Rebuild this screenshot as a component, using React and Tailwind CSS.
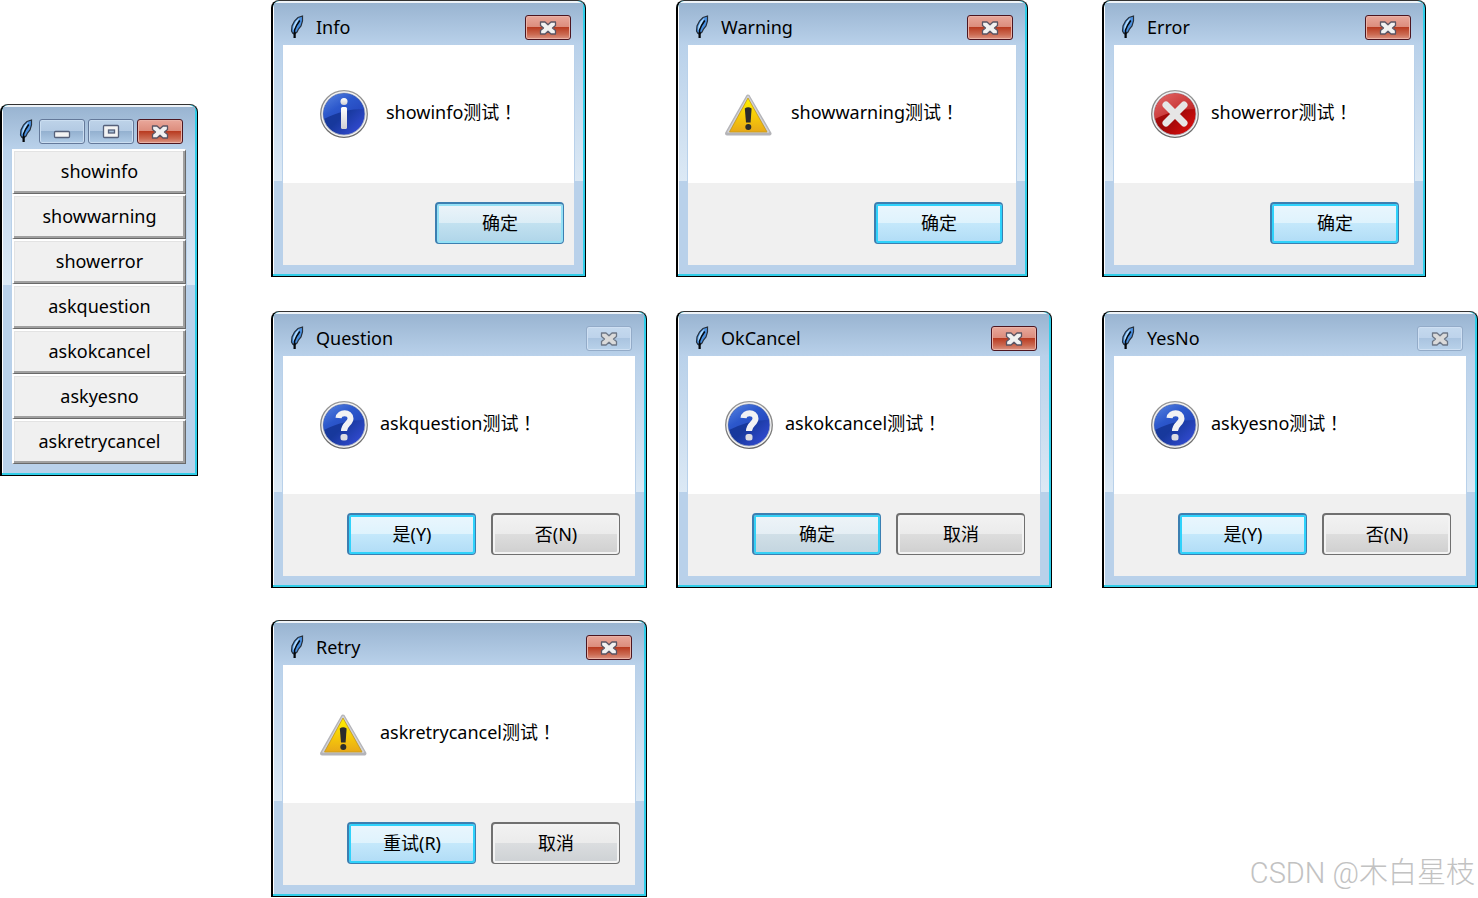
const INFO = 'info', WARN = 'warning', ERR = 'error', ASK = 'question';

const dialogs = [
  { title: 'Info', message: 'showinfo', icon: INFO, size: 'w-[315px]', row: 'mb-[34px]', msg: 'gap-[18px]', foot: 'pr-[10px]', buttons: [{ label: '确定', kind: 'hover' }] },
  { title: 'Warning', message: 'showwarning', icon: WARN, size: 'w-[352px]', row: 'mb-[34px]', msg: 'gap-[18px]', foot: 'pr-[13px]', buttons: [{ label: '确定', kind: 'primary' }] },
  { title: 'Error', message: 'showerror', icon: ERR, size: 'w-[324px]', row: 'mb-[34px]', msg: 'gap-3', foot: 'pr-[15px]', buttons: [{ label: '确定', kind: 'primary' }] },
  { title: 'Question', message: 'askquestion', icon: ASK, size: 'w-[376px]', row: 'mb-8', msg: 'gap-3', foot: 'pr-[15px]', disabled: true, buttons: [{ label: '是(Y)', kind: 'primary' }, { label: '否(N)', kind: 'plain' }] },
  { title: 'OkCancel', message: 'askokcancel', icon: ASK, size: 'w-[376px]', row: 'mb-8', msg: 'gap-3', foot: 'pr-[15px]', buttons: [{ label: '确定', kind: 'fading' }, { label: '取消', kind: 'plain' }] },
  { title: 'YesNo', message: 'askyesno', icon: ASK, size: 'w-[376px]', row: 'mb-8', msg: 'gap-3', foot: 'pr-[15px]', disabled: true, buttons: [{ label: '是(Y)', kind: 'primary' }, { label: '否(N)', kind: 'plain' }] },
  { title: 'Retry', message: 'askretrycancel', icon: WARN, size: 'w-[376px]', row: '', msg: 'gap-3', foot: 'pr-[15px]', buttons: [{ label: '重试(R)', kind: 'primary' }, { label: '取消', kind: 'cool' }] },
];

const commands = ['showinfo', 'showwarning', 'showerror', 'askquestion', 'askokcancel', 'askyesno', 'askretrycancel'];

const buttonKinds = {
  primary: 'border-[#3c7fb1] bg-[linear-gradient(#eaf6fd,#def3fd_50%,#c4e8fb_50%,#b0dcf6)] shadow-[inset_0_0_0_2px_#2fd2fb]',
  fading: 'border-[#3c7fb1] bg-[linear-gradient(#eef4f8,#e4eef4_50%,#d0dfe7_50%,#c3d5df)] shadow-[inset_0_0_0_2px_#36d0f5]',
  hover: 'border-[#3c7fb1] bg-[linear-gradient(#ecf4f9,#dbedf6_50%,#c2e1f0_50%,#afd5e9)] shadow-[inset_0_0_0_2px_#94e1f6]',
  plain: 'border-[#707070] bg-[linear-gradient(#f2f2f2,#ebebeb_50%,#dddddd_50%,#cfcfcf)] shadow-[inset_0_0_0_2px_#f3f3f3]',
  cool: 'border-[#707070] bg-[linear-gradient(#f2f2f2,#ebebeb_50%,#dbdddf_50%,#cdd1d4)] shadow-[inset_0_0_0_2px_#f3f3f3]',
};

function Feather() {
  return (
    <svg className="h-6 w-[14px] shrink-0" viewBox="0 0 14 24" aria-hidden="true">
      <path d="M12.500 1L8 2.500L4.500 6L2 11L1.500 16L3 18.500L4.500 19L7 17L8.500 14L11 11L12.500 6Z" fill="#4a90e0" stroke="#26303c" strokeWidth="1.200" />
      <path d="M9.500 2.800L6 6L3.500 11L3 15.500L5 13L7 8Z" fill="#b4dcfa" />
      <path d="M9.800 5.500L6.500 10.500L4.600 15V23" fill="none" stroke="#05070a" strokeWidth="1.500" />
      <path d="M4.600 17V23" stroke="#05070a" strokeWidth="2" />
    </svg>
  );
}

const CROSS = 'M15.500 6h4.500l3 2.800 3-2.800h4.500v3.500l-3 2.500 3 2.500v3.500h-4.500l-3-2.800-3 2.800h-4.500v-3.500l3-2.500-3-2.500z';

function CaptionButton({ kind, label }) {
  const look = {
    close: 'border-[#4d1620] bg-[linear-gradient(#e9a89b,#dc8c7c_48%,#b93c22_50%,#cb6a52_80%,#dc9483)] shadow-[inset_0_0_0_1px_#eab2a6]',
    off: 'border-[#93abc8] bg-[linear-gradient(#c5d9ee,#bdd3eb_48%,#aac4e0_50%,#b9d2ea)] shadow-[inset_0_0_0_1px_#cfe0f3]',
    min: 'border-[#64799a] bg-[linear-gradient(#bed3e9,#b3cae3_48%,#94b1d0_50%,#b0cbe6)] shadow-[inset_0_0_0_1px_#cbdef1]',
    max: 'border-[#64799a] bg-[linear-gradient(#bed3e9,#b3cae3_48%,#94b1d0_50%,#b0cbe6)] shadow-[inset_0_0_0_1px_#cbdef1]',
  }[kind];
  return (
    <button type="button" aria-label={label} disabled={kind === 'off'} className={`h-[25px] w-[46px] shrink-0 rounded-[3px] border ${look}`}>
      <svg className="block h-[23px] w-11" viewBox="1 0 44 23" aria-hidden="true">
        {(kind === 'close' || kind === 'off') && (
          <path d={CROSS} fill={kind === 'off' ? '#dadada' : '#f1f1f1'} stroke={kind === 'off' ? '#6d7786' : '#5a5463'} strokeWidth="1.300" strokeLinejoin="round" />
        )}
        {kind === 'min' && <rect x="15.500" y="11.500" width="15" height="6" rx="1" fill="#f3f3f3" stroke="#55607a" strokeWidth="1.300" />}
        {kind === 'max' && (
          <>
            <rect x="15.500" y="5.500" width="15" height="12" rx="1" fill="#f3f3f3" stroke="#55607a" strokeWidth="1.300" />
            <rect x="20.500" y="10" width="6" height="3" fill="#a4bcd6" stroke="#55607a" strokeWidth="1.300" />
          </>
        )}
      </svg>
    </button>
  );
}

function Defs() {
  return (
    <svg className="absolute size-0" aria-hidden="true">
      <defs>
        <linearGradient id="blue" x1="0" y1="0" x2="1" y2="1">
          <stop offset="0" stopColor="#5a86e0" />
          <stop offset=".45" stopColor="#2c58cc" />
          <stop offset="1" stopColor="#2240b8" />
        </linearGradient>
        <linearGradient id="deep" x1="0" y1="0" x2="1" y2="1">
          <stop offset="0" stopColor="#173a9c" />
          <stop offset=".5" stopColor="#17389c" />
          <stop offset="1" stopColor="#3a50e0" />
        </linearGradient>
        <linearGradient id="red" x1="0" y1="0" x2="1" y2="1">
          <stop offset="0" stopColor="#e46a6a" />
          <stop offset="1" stopColor="#b81818" />
        </linearGradient>
        <linearGradient id="crimson" x1="0" y1="0" x2="1" y2="1">
          <stop offset="0" stopColor="#c01414" />
          <stop offset=".5" stopColor="#9c0808" />
          <stop offset="1" stopColor="#e81010" />
        </linearGradient>
        <linearGradient id="rim" x1="0" y1="0" x2="0" y2="1">
          <stop offset="0" stopColor="#9a9a9a" />
          <stop offset="1" stopColor="#6a6a6a" />
        </linearGradient>
        <linearGradient id="silver" x1="0" y1="0" x2="0" y2="1">
          <stop offset="0" stopColor="#ffffff" />
          <stop offset="1" stopColor="#cfcfd4" />
        </linearGradient>
        <linearGradient id="gold" x1="0" y1="0" x2="0" y2="1">
          <stop offset="0" stopColor="#fff200" />
          <stop offset=".6" stopColor="#f5c60a" />
          <stop offset="1" stopColor="#e8a818" />
        </linearGradient>
      </defs>
    </svg>
  );
}

function StatusIcon({ kind }) {
  if (kind === WARN) {
    return (
      <svg className="size-12 shrink-0" viewBox="0 0 48 48" role="img" aria-label="warning">
        <path d="M23 6.500L44.500 43.500H2Z" fill="#b4b4b8" stroke="#b4b4b8" strokeWidth="4" strokeLinejoin="round" />
        <path d="M23 6.500L43.500 42H3Z" fill="none" stroke="#d2d2d6" strokeWidth="1.500" strokeLinejoin="round" />
        <path d="M23 8L42 42H4.500Z" fill="url(#gold)" stroke="#c69a1c" strokeWidth=".8" />
        <path d="M19.800 18.500Q23.200 16 26.600 18.500L25.600 32.500H21Z" fill="#2c2c2c" />
        <circle cx="23.300" cy="37" r="3" fill="#2c2c2c" />
      </svg>
    );
  }
  const isError = kind === ERR;
  return (
    <svg className="size-12 shrink-0" viewBox="0 0 48 48" role="img" aria-label={kind}>
      <circle cx="24" cy="24" r="23.300" fill="#f4f4f4" stroke="url(#rim)" strokeWidth="1.300" />
      <circle cx="24" cy="24" r="21" fill={isError ? 'url(#crimson)' : 'url(#deep)'} stroke="#aeb4c0" strokeWidth=".8" />
      <path d="M4 29A20.600 20.600 0 0 1 44 19C30 19 18 22 4 29Z" fill={isError ? 'url(#red)' : 'url(#blue)'} />
      {kind === INFO && (
        <g fill="url(#silver)">
          <circle cx="24" cy="11.500" r="3.500" />
          <rect x="21" y="17" width="6" height="22" rx="1.500" />
        </g>
      )}
      {kind === ASK && (
        <>
          <path d="M18.500 17C19 10.500 30.500 10.500 30.500 17.500C30.500 22.500 24 23 24 30" fill="none" stroke="#f2f2f4" strokeWidth="6" />
          <rect x="20.500" y="33" width="7" height="6.500" rx="2.500" fill="#dcdce2" />
        </>
      )}
      {isError && <path d="M15 15L33 33M33 15L15 33" stroke="#e6e6e6" strokeWidth="7" strokeLinecap="round" />}
    </svg>
  );
}

function Frame({ title, controls, className = '', children }) {
  return (
    <section aria-label={title || 'tk'} className={`max-w-full overflow-hidden rounded-t-lg border border-l-2 border-black border-t-[#333] bg-[#30cde8] pr-[2px] pb-[2px] ${className}`}>
      <div className="rounded-t-md border-t-2 border-l border-t-[#eef3f8] border-l-white bg-[#b9d1ea] pb-[9px]">
        <header className="flex h-[42px] items-start bg-linear-to-b from-[#99b4d1] to-[#b9d1ea] pt-3 pr-3 pl-4">
          <Feather />
          {title && <h2 className="pl-3 leading-6">{title}</h2>}
          <div className="ml-auto flex gap-[3px]">{controls}</div>
        </header>
        <div className="bg-[linear-gradient(#b9d1ea,#dce9f5_136px,#b9d1ea_136px)] px-2">
          <div className="border-x border-[#b9d1ea]">{children}</div>
        </div>
      </div>
    </section>
  );
}

function Dialog({ title, message, icon, size, row, msg, foot, disabled, buttons }) {
  return (
    <Frame
      title={title}
      className={`${size} ${row}`}
      controls={<CaptionButton kind={disabled ? 'off' : 'close'} label="Close" />}
    >
      <div className={`flex items-center bg-white py-[45px] pl-[37px] ${msg}`}>
        <StatusIcon kind={icon} />
        <p className="pb-[6px] leading-6 whitespace-nowrap">
          {message}测试<span className="font-['Noto_Sans_CJK_TC',sans-serif]">！</span>
        </p>
      </div>
      <div className={`flex justify-end gap-[15px] bg-[#f0f0f0] pt-[19px] pb-[21px] ${foot}`}>
        {buttons.map((b) => (
          <button key={b.label} type="button" className={`h-[42px] w-[129px] rounded-[4px] border-t-2 border-r border-b border-l-2 leading-6 ${buttonKinds[b.kind]}`}>
            <span className="block pb-[2px]">{b.label}</span>
          </button>
        ))}
      </div>
    </Frame>
  );
}

export default function App() {
  return (
    <main className="flex min-h-screen items-start bg-white font-['Noto_Sans','Noto_Sans_CJK_SC',sans-serif] text-[18px] text-black">
      <Defs />
      <Frame
        className="mt-[104px] mr-[73px] w-[198px] shrink-0"
        controls={
          <>
            <CaptionButton kind="min" label="Minimize" />
            <CaptionButton kind="max" label="Maximize" />
            <CaptionButton kind="close" label="Close" />
          </>
        }
      >
        <div className="flex flex-col">
          {commands.map((c) => (
            <button key={c} type="button" className="h-[45px] border-t-2 border-r border-b border-l-2 border-t-white border-r-[#696969] border-b-[#696969] border-l-white bg-[#f0f0f0] pb-[2px] leading-6 shadow-[inset_-2px_-2px_0_#a0a0a0,inset_1px_1px_0_#e3e3e3]">
              {c}
            </button>
          ))}
        </div>
      </Frame>
      <div className="grid flex-1 grid-cols-[405fr_426fr_376fr]">
        {dialogs.map((d) => (
          <Dialog key={d.title} {...d} />
        ))}
        <p className="col-span-2 self-end pr-[3px] pb-2 text-right font-[Roboto,'Noto_Sans_CJK_SC',sans-serif] text-[29px] leading-8 font-light text-[#c2c2c2]">
          CSDN @木白星枝
        </p>
      </div>
    </main>
  );
}
